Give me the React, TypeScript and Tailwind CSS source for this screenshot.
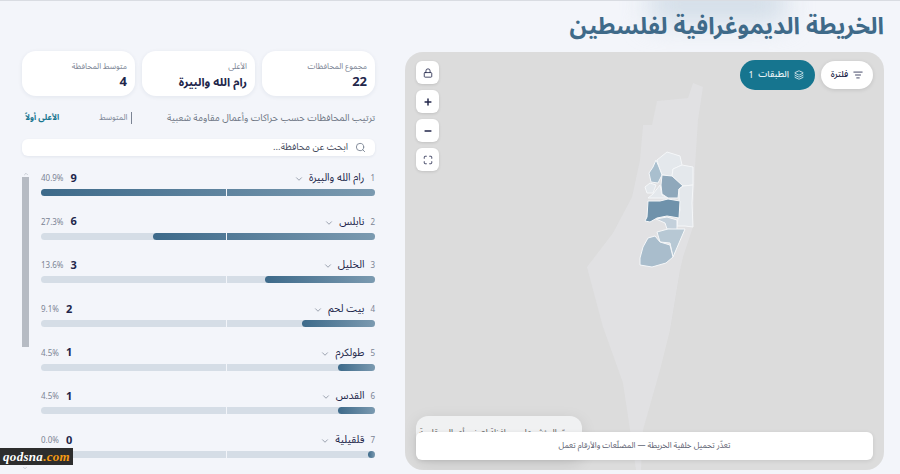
import React from "react";
import { ChevronDown, ChevronUp, Search, Lock, Plus, Minus, Maximize, Layers, ListFilter } from "lucide-react";

const rows = [
  { n: 1, name: "رام الله والبيرة", pct: "40.9%", v: 9, w: 100 },
  { n: 2, name: "نابلس", pct: "27.3%", v: 6, w: 66.5 },
  { n: 3, name: "الخليل", pct: "13.6%", v: 3, w: 33 },
  { n: 4, name: "بيت لحم", pct: "9.1%", v: 2, w: 22 },
  { n: 5, name: "طولكرم", pct: "4.5%", v: 1, w: 11 },
  { n: 6, name: "القدس", pct: "4.5%", v: 1, w: 11 },
  { n: 7, name: "قلقيلية", pct: "0.0%", v: 0, w: 2 },
];

function Stat({ label, value, small }: { label: string; value: string; small?: boolean }) {
  return (
    <div className="flex-1 h-[45px] rounded-[14px] bg-white shadow-[0_1px_4px_rgba(30,50,90,0.08)] px-[8px] pt-[10px] text-right">
      <div className="text-[8px] leading-[12px] text-[#7b8494]">{label}</div>
      <div className={small ? "text-[11.5px] leading-[18px] font-bold text-[#22264a]" : "text-[13px] leading-[18px] font-bold text-[#22264a]"}>{value}</div>
    </div>
  );
}

function Row({ r }: { r: (typeof rows)[number] }) {
  return (
    <div className="h-[43.67px]">
      <div className="flex items-center h-[22px]">
        <span className="text-[8px] text-[#7b8494] ml-[6px]">{r.n}</span>
        <span className="text-[10.5px] text-[#22264a]">{r.name}</span>
        <ChevronDown className="w-[10px] h-[10px] text-[#8a92a0] mr-[5px]" />
        <span className="mr-auto flex items-center gap-[7px]">
          <span className="text-[11px] font-bold text-[#22264a]">{r.v}</span>
          <span className="text-[8px] text-[#7b8494]">{r.pct}</span>
        </span>
      </div>
      <div className="relative h-[7px] -mt-[1px] rounded-full bg-[#d5dde6]">
        <div
          className="h-full rounded-full bg-gradient-to-l from-[#7b9ab0] to-[#3d6a8a]"
          style={{ width: `${r.w}%` }}
        />
        <div className="absolute inset-y-0 left-[184.5px] w-[1.5px] bg-[#f3f5fa]" />
      </div>
    </div>
  );
}

const regions: { d: string; f: string }[] = [
  { d: "M667 152 L680 156 L682 165 L673 169 L672 176 L662 175 L659 167 L657 160 Z", f: "#e4e8ec" },
  { d: "M673 169 L682 165 L693 167 L693 185 L683 186 L672 176 Z", f: "#e4e8ec" },
  { d: "M656 160 L659 167 L662 175 L658 183 L651 182 L649 173 L653 167 Z", f: "#a9bfce" },
  { d: "M650 183 L656 185 L653 193 L647 193 L645 187 Z", f: "#e4e8ec" },
  { d: "M660 185 L662 195 L668 198 L648 198 L653 194 Z", f: "#e4e8ec" },
  { d: "M662 175 L672 176 L683 186 L679 189 L678 198 L668 198 L662 194 L661 185 Z", f: "#8fa8bb" },
  { d: "M683 186 L693 185 L692 203 L693 227 L685 226 L677 226 L678 218 L680 210 L679 200 L679 189 Z", f: "#e4e8ec" },
  { d: "M648 201 L660 201 L668 199 L680 201 L679 218 L673 217 L667 216 L657 218 L650 222 L645 221 L647 217 Z", f: "#6f92ab" },
  { d: "M656 219 L667 217 L677 220 L677 230 L667 229 L665 223 Z", f: "#c3d0db" },
  { d: "M657 232 L668 229 L685 229 L679 243 L673 257 L670 243 L660 242 Z", f: "#b7c8d4" },
  { d: "M648 238 L655 236 L660 242 L670 245 L673 257 L666 263 L652 267 L640 265 L640 258 L643 247 Z", f: "#a9bdcc" },
];

export default function App() {
  return (
    <div
      dir="rtl"
      className="relative w-[900px] h-[474px] overflow-hidden bg-[#f3f5fa] font-['Noto_Sans_Arabic','DejaVu_Sans','Noto_Sans',sans-serif] border-t border-[#d9dce2]"
    >
      <div className="absolute top-[-14px] left-[650px] w-[135px] h-[34px] bg-[#cfdbe6] blur-[14px]" />
      <div className="relative">
        <header className="h-[51px] pr-[16px] flex items-center">
          <h1 className="text-[23.5px] font-bold text-[#3f6a89] leading-[36px]">الخريطة الديموغرافية لفلسطين</h1>
        </header>
        <main className="flex pr-[16px] pl-[22px] gap-[30px]">
          <section className="relative w-[479px] h-[418px] shrink-0 rounded-[18px] bg-[#dcdcdc] overflow-hidden">
            <svg className="absolute top-0 left-0" width="479" height="418" viewBox="405 52 479 418">
              <path d="M693 83 L703 87 L698 120 L695 167 L693 227 L683 257 L680 270 L670 330 L660 370 L643 430 L641 470 L636 470 L623 383 L603 327 L587 267 L613 233 L632 197 L640 160 L643 125 L652 125 L657 101 L688 98 Z" fill="#e3e4e6" opacity="0.65" />
              {regions.map((r, i) => (
                <path key={i} d={r.d} fill={r.f} stroke="#f5f7f9" strokeWidth="1" strokeLinejoin="round" />
              ))}
            </svg>

            <div className="absolute top-[9px] right-[11px] flex gap-[6px]">
              <button className="h-[28px] w-[52px] rounded-full bg-white shadow-[0_1px_4px_rgba(0,0,0,0.12)] flex items-center justify-center gap-[5px] text-[9px] font-medium text-[#22264a]">
                <ListFilter className="w-[10px] h-[10px]" />
                فلترة
              </button>
              <button className="h-[30px] w-[75px] rounded-full bg-[#16758f] flex items-center pr-[11px] gap-[5px] text-[9px] font-medium text-[#e8f2f5] -mt-[1px]">
                <Layers className="w-[10px] h-[10px]" />
                الطبقات
                <span className="text-[8px] leading-[12px] mt-[2px]">1</span>
              </button>
            </div>

            <div className="absolute top-[9px] left-[11px] flex flex-col gap-[6px]">
              {[Lock, Plus, Minus, Maximize].map((I, i) => (
                <div key={i} className="w-[23px] h-[23px] rounded-[6px] bg-white shadow-[0_1px_3px_rgba(0,0,0,0.12)] flex items-center justify-center text-[#22264a]">
                  <I className="w-[10px] h-[10px]" strokeWidth={i === 1 || i === 2 ? 3.5 : 2} />
                </div>
              ))}
            </div>

            <div className="absolute left-[11px] bottom-[10px] w-[166px] h-[44px] rounded-[12px] bg-[#f0f1f2] shadow-[0_4px_16px_rgba(0,0,0,0.1)] text-[8.5px] text-[#555] px-[12px] pt-[10px] overflow-hidden whitespace-nowrap">
              مرّر المؤشر على محافظة لعرض أعمال مقاومة
            </div>
            <div className="absolute left-[11px] right-[11px] bottom-[10px] h-[28px] rounded-[6px] bg-white shadow-[0_1px_4px_rgba(0,0,0,0.1)] flex items-center justify-center text-[8px] text-[#5b6070]">
              تعذّر تحميل خلفية الخريطة — المضلّعات والأرقام تعمل
            </div>
          </section>

          <section className="flex-1 min-w-0">
            <div className="flex gap-[7px] -mt-[1px]">
              <Stat label="مجموع المحافظات" value="22" />
              <Stat label="الأعلى" value="رام الله والبيرة" small />
              <Stat label="متوسط المحافظة" value="4" />
            </div>
            <div className="flex items-center mt-[13px] h-[18px]">
              <span className="text-[9.5px] text-[#6e7684]">ترتيب المحافظات حسب حراكات وأعمال مقاومة شعبية</span>
              <span className="mr-auto flex items-center gap-[40px] ml-[3px]">
                <span className="text-[8px] text-[#7b8494] border-r border-[#7b8494] pr-[4px]">المتوسط</span>
                <span className="text-[8px] font-bold text-[#16758f]">الأعلى أولاً</span>
              </span>
            </div>
            <div className="mt-[12px] h-[17px] rounded-[6px] bg-white shadow-[0_1px_3px_rgba(30,50,90,0.08)] flex items-center pr-[9px] gap-[7px] text-[9.5px] text-[#444a5c]">
              <Search className="w-[11px] h-[11px] text-[#7b8494]" />
              ابحث عن محافظة...
            </div>
            <div className="mt-[12px] pl-[19px]">
              {rows.map((r) => (
                <Row key={r.n} r={r} />
              ))}
            </div>
          </section>
        </main>
      </div>

      <div className="absolute left-[22px] top-[170px] flex flex-col items-center w-[7px]">
        <ChevronUp className="w-[6px] h-[6px] text-[#a0a6b0]" />
        <div className="w-[7px] h-[170px] bg-[#b6bbc3]" />
      </div>
      <ChevronDown className="absolute left-[22px] top-[464px] w-[6px] h-[6px] text-[#a0a6b0]" />

      <div dir="ltr" className="absolute left-0 top-[447px] w-[73px] h-[17px] bg-[#2d2d2d] flex items-center justify-center font-['Liberation_Serif',serif] italic font-bold text-[13px] tracking-[0.3px]">
        <span className="text-white">qodsna</span>
        <span className="text-[#f59a12]">.com</span>
      </div>
    </div>
  );
}
